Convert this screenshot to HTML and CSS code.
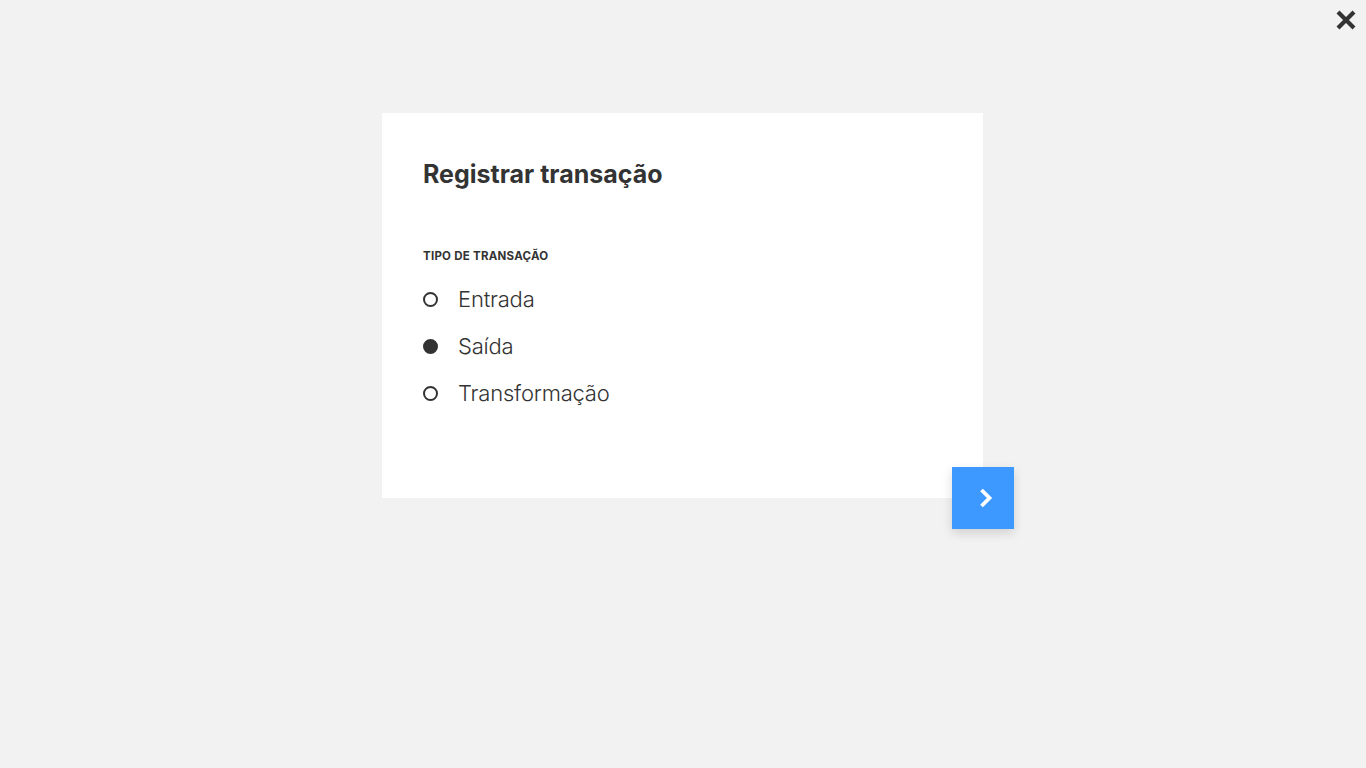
FILE: index.html
```html
<!DOCTYPE html>
<html lang="pt">
<head>
<meta charset="utf-8">
<title>Registrar transação</title>
<link rel="stylesheet" href="styles.css">
</head>
<body>
<button class="close" aria-label="Fechar">
  <svg width="22" height="22" viewBox="0 0 22 22"><path d="M3 3 L19 19 M19 3 L3 19" stroke="#333" stroke-width="4.2" stroke-linecap="butt"/></svg>
</button>
<main class="stage">
  <section class="card">
    <h1 class="title">Registrar transação</h1>
    <div class="field-label">TIPO DE TRANSAÇÃO</div>
    <ul class="options">
      <li class="option"><span class="radio"></span><span class="opt-text">Entrada</span></li>
      <li class="option"><span class="radio checked"></span><span class="opt-text">Saída</span></li>
      <li class="option"><span class="radio"></span><span class="opt-text">Transformação</span></li>
    </ul>
    <button class="next" aria-label="Próximo">
      <svg width="16" height="22" viewBox="0 0 16 22"><path d="M3.5 3 L11.5 11 L3.5 19" fill="none" stroke="#fff" stroke-width="3.8" stroke-linejoin="miter"/></svg>
    </button>
  </section>
</main>
</body>
</html>
```
FILE: styles.css
```css
* { box-sizing: border-box; }
html, body { margin: 0; padding: 0; }
body {
  background: #f2f2f2;
  font-family: Inter, "Open Sans", "Liberation Sans", sans-serif;
  color: #333;
  min-height: 768px;
}
.close {
  position: absolute;
  top: 9px;
  right: 9px;
  width: 22px;
  height: 22px;
  padding: 0;
  border: 0;
  background: transparent;
  display: flex;
}
.stage {
  display: flex;
  justify-content: center;
  padding-top: 113px;
  padding-right: 1px;
}
.card {
  position: relative;
  width: 601px;
  height: 385px;
  background: #fff;
  padding: 45px 41px 0;
}
.title {
  margin: 0;
  font-size: 25px;
  font-weight: 700;
  line-height: 32px;
  letter-spacing: 0;
  color: #333;
}
.field-label {
  margin-top: 59px;
  font-size: 11.5px;
  font-weight: 700;
  line-height: 14px;
  letter-spacing: 0.25px;
  color: #333;
}
.options {
  list-style: none;
  margin: 22px 0 0;
  padding: 0;
  display: flex;
  flex-direction: column;
  gap: 19px;
}
.option {
  display: flex;
  align-items: center;
  height: 28px;
}
.radio {
  width: 15px;
  height: 15px;
  border: 2px solid #333;
  border-radius: 50%;
  margin-right: 20px;
  flex: none;
}
.radio.checked { background: #333; }
.opt-text {
  font-size: 22px;
  font-weight: 300;
  letter-spacing: -0.2px;
  color: #333;
}
.next {
  position: absolute;
  right: -31px;
  bottom: -31px;
  width: 62px;
  height: 62px;
  border: 0;
  padding: 0 0 0 5px;
  background: #3d99ff;
  box-shadow: 0 4px 10px rgba(0,0,0,0.14);
  display: flex;
  align-items: center;
  justify-content: center;
}
```
